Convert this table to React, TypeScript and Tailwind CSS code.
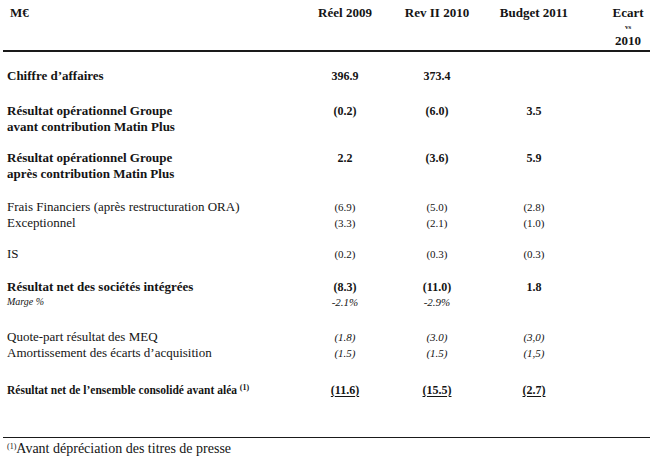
import React from "react";

type Row = {
  label: React.ReactNode;
  labelClass: string;
  cells: (string | null)[];
  cellClass: string;
  mt: string;
  h?: string;
};

const GRID = "grid grid-cols-[297px_90px_94px_100px_66px]";

const rows: Row[] = [
  {
    label: "Chiffre d\u2019affaires",
    labelClass: "font-bold text-[13px]",
    cells: ["396.9", "373.4", null, null],
    cellClass: "font-bold text-[12px]",
    mt: "mt-[16px]",
  },
  {
    label: (
      <>
        Résultat opérationnel Groupe
        <br />
        avant contribution Matin Plus
      </>
    ),
    labelClass: "font-bold text-[13px]",
    cells: ["(0.2)", "(6.0)", "3.5", null],
    cellClass: "font-bold text-[12px]",
    mt: "mt-[19px]",
  },
  {
    label: (
      <>
        Résultat opérationnel Groupe
        <br />
        après contribution Matin Plus
      </>
    ),
    labelClass: "font-bold text-[13px]",
    cells: ["2.2", "(3.6)", "5.9", null],
    cellClass: "font-bold text-[12px]",
    mt: "mt-[15px]",
  },
  {
    label: "Frais Financiers (après restructuration ORA)",
    labelClass: "text-[13px]",
    cells: ["(6.9)", "(5.0)", "(2.8)", null],
    cellClass: "text-[11px]",
    mt: "mt-[17px]",
  },
  {
    label: "Exceptionnel",
    labelClass: "text-[13px]",
    cells: ["(3.3)", "(2.1)", "(1.0)", null],
    cellClass: "text-[11px]",
    mt: "mt-0",
  },
  {
    label: "IS",
    labelClass: "text-[13px]",
    cells: ["(0.2)", "(0.3)", "(0.3)", null],
    cellClass: "text-[11px]",
    mt: "mt-[15px]",
  },
  {
    label: "Résultat net des sociétés intégrées",
    labelClass: "font-bold text-[13px]",
    cells: ["(8.3)", "(11.0)", "1.8", null],
    cellClass: "font-bold text-[12px]",
    mt: "mt-[17px]",
  },
  {
    label: "Marge %",
    labelClass: "italic text-[10px]",
    cells: ["-2.1%", "-2.9%", null, null],
    cellClass: "italic text-[11px]",
    mt: "mt-0",
    h: "leading-[14px]",
  },
  {
    label: "Quote-part résultat des MEQ",
    labelClass: "text-[13px]",
    cells: ["(1.8)", "(3.0)", "(3,0)", null],
    cellClass: "italic text-[11px]",
    mt: "mt-[20px]",
  },
  {
    label: "Amortissement des écarts d\u2019acquisition",
    labelClass: "text-[13px]",
    cells: ["(1.5)", "(1.5)", "(1,5)", null],
    cellClass: "italic text-[11px]",
    mt: "mt-0",
  },
  {
    label: (
      <>
        Résultat net de l’ensemble consolidé avant aléa{" "}
        <sup className="text-[8px] font-bold">(1)</sup>
      </>
    ),
    labelClass: "font-bold text-[11.5px]",
    cells: ["(11.6)", "(15.5)", "(2.7)", null],
    cellClass: "font-bold text-[12px] underline decoration-1 underline-offset-2",
    mt: "mt-[21px]",
  },
];

function TableRow({ row }: { row: Row }) {
  return (
    <div className={`${GRID} ${row.mt} ${row.h ?? "leading-[16px]"}`}>
      <div className={`pl-1 ${row.labelClass}`}>{row.label}</div>
      {row.cells.map((c, i) => (
        <div
          key={i}
          className={`text-center ${row.cellClass} ${i === 3 ? "pl-[22px]" : ""}`}
        >
          {c ?? ""}
        </div>
      ))}
    </div>
  );
}

export default function App() {
  return (
    <div className="h-[457px] w-[661px] overflow-hidden bg-white pl-[3px] font-['Liberation_Serif','Times_New_Roman',serif] text-[#141414]">
      <div className="w-[647px]">
        {/* en-tête */}
        <div className={`${GRID} pt-[5px] text-[13px] font-bold leading-[16px]`}>
          <div className="pl-[7px]">M€</div>
          <div className="text-center">Réel 2009</div>
          <div className="text-center">Rev II 2010</div>
          <div className="text-center">Budget 2011</div>
          <div className="flex flex-col items-center pl-[22px]">
            <span>Ecart</span>
            <span className="text-[7px] leading-[12px]">vs</span>
            <span>2010</span>
          </div>
        </div>
        <div className="mt-[1px] border-t-2 border-[#1a1a1a]" />

        {rows.map((r, i) => (
          <TableRow key={i} row={r} />
        ))}

        <div className="mt-[39px] border-t border-[#1a1a1a]" />
        <div className="mt-[3px] pl-1 text-[14px] leading-[16px]">
          <sup className="text-[8px]">(1)</sup>Avant dépréciation des titres de presse
        </div>
      </div>
    </div>
  );
}
